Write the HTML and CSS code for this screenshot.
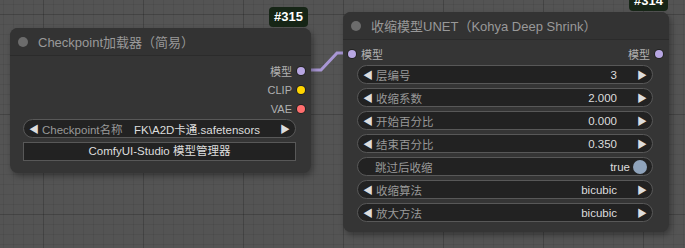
FILE: index.html
```html
<!DOCTYPE html>
<html lang="en">
<head>
  <meta charset="UTF-8">
  <meta name="viewport" content="width=device-width, initial-scale=1.0">
  <title>ComfyUI Nodes</title>
  <link rel="stylesheet" href="styles.css">
</head>
<body>
  <div class="canvas">
    <svg class="links" width="685" height="248">
      <path d="M306 70 L321 70 L337 53 L350 53" />
    </svg>

    <!-- Checkpoint loader -->
    <div class="node node-ckpt">
      <div class="badge">#315</div>
      <div class="node-title"><span class="title-dot"></span>Checkpoint加载器（简易）</div>
      <div class="node-body">
        <div class="slot out"><span>模型</span><i class="dot purple"></i></div>
        <div class="slot out"><span>CLIP</span><i class="dot yellow"></i></div>
        <div class="slot out"><span>VAE</span><i class="dot red"></i></div>
        <div class="widgets">
          <div class="widget">
            <span class="arrow">◀</span>
            <span class="label">Checkpoint名称</span>
            <span class="value">FK\A2D卡通.safetensors</span>
            <span class="arrow">▶</span>
          </div>
          <div class="button">ComfyUI-Studio 模型管理器</div>
        </div>
      </div>
    </div>

    <!-- Deep shrink -->
    <div class="node node-shrink">
      <div class="badge">#314</div>
      <div class="node-title"><span class="title-dot"></span>收缩模型UNET（Kohya Deep Shrink）</div>
      <div class="node-body">
        <div class="slot both"><i class="dot purple"></i><span>模型</span><span class="spacer"></span><span>模型</span><i class="dot purple"></i></div>
        <div class="widgets">
          <div class="widget"><span class="arrow">◀</span><span class="label">层编号</span><span class="value">3</span><span class="arrow">▶</span></div>
          <div class="widget"><span class="arrow">◀</span><span class="label">收缩系数</span><span class="value">2.000</span><span class="arrow">▶</span></div>
          <div class="widget"><span class="arrow">◀</span><span class="label">开始百分比</span><span class="value">0.000</span><span class="arrow">▶</span></div>
          <div class="widget"><span class="arrow">◀</span><span class="label">结束百分比</span><span class="value">0.350</span><span class="arrow">▶</span></div>
          <div class="widget toggle"><span class="label">跳过后收缩</span><span class="value">true</span><i class="knob"></i></div>
          <div class="widget"><span class="arrow">◀</span><span class="label">收缩算法</span><span class="value">bicubic</span><span class="arrow">▶</span></div>
          <div class="widget"><span class="arrow">◀</span><span class="label">放大方法</span><span class="value">bicubic</span><span class="arrow">▶</span></div>
        </div>
      </div>
    </div>
  </div>
</body>
</html>
```

FILE: styles.css
```css
body {
  margin: 0;
  font-family: "Liberation Sans", Arial, "Noto Sans CJK SC", sans-serif;
  background-color: #535353;
}
.canvas {
  position: relative;
  width: 685px;
  height: 248px;
  overflow: hidden;
  background-color: #545454;
  background-image:
    linear-gradient(to right, rgba(0, 0, 0, 0.14) 1px, transparent 1px),
    linear-gradient(to bottom, rgba(0, 0, 0, 0.14) 1px, transparent 1px),
    linear-gradient(to right, rgba(0, 0, 0, 0.06) 1px, transparent 1px),
    linear-gradient(to bottom, rgba(0, 0, 0, 0.06) 1px, transparent 1px);
  background-size: 100px 100px, 100px 100px, 10px 10px, 10px 10px;
  background-position: 43px 14px, 43px 14px, 3px 4px, 3px 4px;
}
.links {
  position: absolute;
  left: 0;
  top: 0;
}
.links path {
  fill: none;
  stroke: #a896d4;
  stroke-width: 3;
}

/* nodes */
.node {
  position: absolute;
  background-color: #353535;
  border-radius: 8px;
  box-shadow: 2px 3px 6px rgba(0, 0, 0, 0.35);
  color: #aaa;
}
.node-ckpt {
  left: 10px;
  top: 28px;
  width: 301px;
  height: 145px;
}
.node-shrink {
  left: 343px;
  top: 12px;
  width: 326px;
  height: 220px;
}
.badge {
  position: absolute;
  right: 3px;
  top: -21px;
  height: 20px;
  padding: 0 5px;
  line-height: 20px;
  border-radius: 4px;
  background-color: #162516;
  color: #fff;
  font-size: 13px;
  font-weight: bold;
}
.node-shrink .badge {
  right: 1px;
}
.node-title {
  display: flex;
  align-items: center;
  height: 27px;
  padding-left: 8px;
  border-bottom: 1px solid #2b2b2b;
  background-color: #333;
  border-radius: 8px 8px 0 0;
  font-size: 13px;
  color: #999;
}
.title-dot {
  width: 10px;
  height: 10px;
  border-radius: 50%;
  background-color: #6c6c6c;
  margin-right: 10px;
}
.node-body {
  padding-top: 5px;
}
.node-shrink .node-body {
  padding-top: 4px;
}

/* slots */
.slot {
  display: flex;
  align-items: center;
  height: 19px;
  font-size: 11px;
  color: #b0b0b0;
}
.slot.out {
  justify-content: flex-end;
  padding-right: 6px;
}
.slot.both {
  padding: 0 6px 0 5px;
}
.slot .spacer {
  flex: 1;
}
.dot {
  width: 8px;
  height: 8px;
  border-radius: 50%;
  margin-left: 5px;
  box-shadow: 0 0 0 1px rgba(0, 0, 0, 0.35);
}
.slot.both .dot:first-child {
  margin-left: 0;
  margin-right: 5px;
}
.purple { background-color: #b7a6e2; }
.yellow { background-color: #ffd500; }
.red { background-color: #ff6e6e; }

/* widgets */
.widgets {
  display: flex;
  flex-direction: column;
  gap: 4px;
  padding: 1px 15px 0 13px;
}
.node-shrink .widgets {
  padding: 2px 16px 0 14px;
}
.widget {
  display: flex;
  align-items: center;
  height: 17px;
  padding: 0 5px;
  border: 1px solid #585858;
  border-radius: 10px;
  background-color: #222;
  font-size: 11.5px;
}
.widget .arrow {
  color: #ddd;
  font-size: 10px;
}
.widget .label {
  color: #999;
  margin-left: 3px;
  flex: 1;
}
.widget .value {
  color: #ddd;
  margin-right: 20px;
}
.widget.toggle {
  padding-left: 14px;
}
.widget.toggle .value {
  margin-right: 3px;
}
.knob {
  width: 14px;
  height: 14px;
  border-radius: 50%;
  background-color: #8fa3bb;
}
.button {
  height: 17px;
  line-height: 17px;
  border: 1px solid #585858;
  background-color: #222;
  color: #ddd;
  text-align: center;
  font-size: 11.5px;
}
```
